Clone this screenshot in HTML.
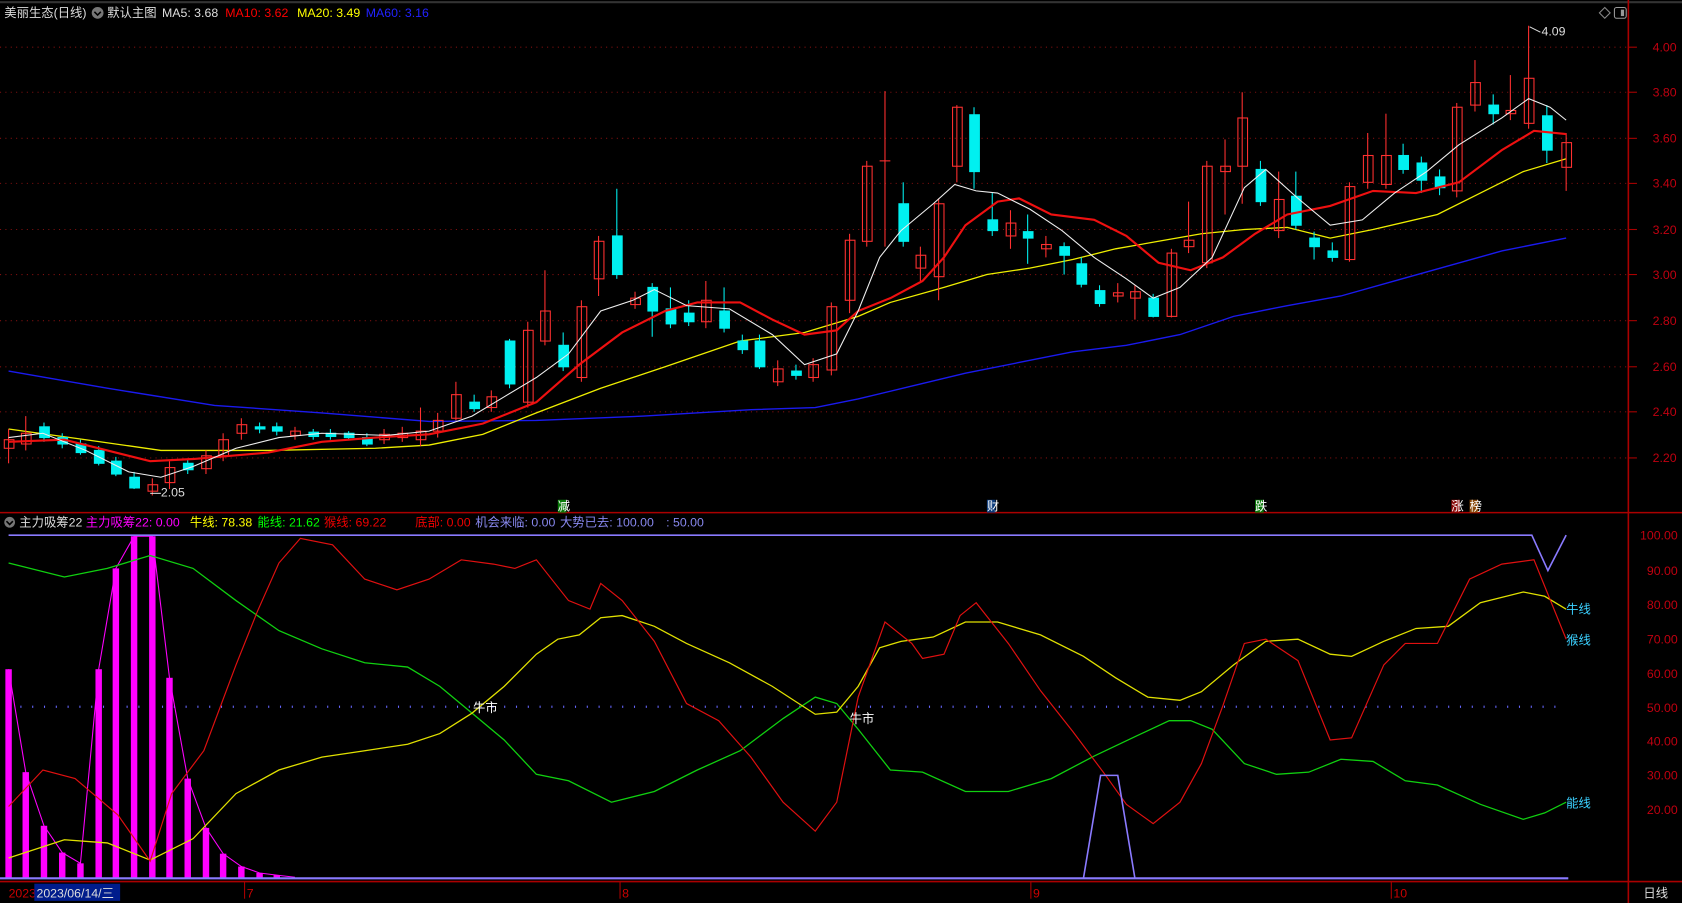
<!DOCTYPE html>
<html><head><meta charset="utf-8"><style>
html,body{margin:0;padding:0;background:#000;overflow:hidden}
svg{display:block}
text{font-family:"Liberation Sans","Noto Sans CJK SC",sans-serif;font-size:11.5px}
</style></head><body>
<svg width="1682" height="903" viewBox="0 0 1568 842" preserveAspectRatio="none" xmlns="http://www.w3.org/2000/svg">
<rect width="1568" height="842" fill="#000"/>
<line x1="0" y1="2" x2="1568" y2="2" stroke="#333" stroke-width="2"/>
<g stroke="#801010" stroke-dasharray="1,4" stroke-width="1">
<line x1="0" y1="44" x2="1518" y2="44"/><line x1="0" y1="86" x2="1518" y2="86"/><line x1="0" y1="129" x2="1518" y2="129"/><line x1="0" y1="171" x2="1518" y2="171"/><line x1="0" y1="214" x2="1518" y2="214"/><line x1="0" y1="256" x2="1518" y2="256"/><line x1="0" y1="299" x2="1518" y2="299"/><line x1="0" y1="342" x2="1518" y2="342"/><line x1="0" y1="384" x2="1518" y2="384"/><line x1="0" y1="427" x2="1518" y2="427"/>
</g>
<line x1="1518" y1="0" x2="1518" y2="842" stroke="#a00" stroke-width="1.5"/>
<line x1="0" y1="478" x2="1568" y2="478" stroke="#a00" stroke-width="1.5"/>
<line x1="0" y1="822" x2="1568" y2="822" stroke="#a00" stroke-width="1.5"/>
<g fill="#c00010" text-anchor="end">
<text x="1563" y="48">4.00</text><text x="1563" y="90">3.80</text><text x="1563" y="133">3.60</text><text x="1563" y="175">3.40</text><text x="1563" y="218">3.20</text><text x="1563" y="260">3.00</text><text x="1563" y="303">2.80</text><text x="1563" y="346">2.60</text><text x="1563" y="388">2.40</text><text x="1563" y="431">2.20</text>
<text x="1564" y="503">100.00</text><text x="1564" y="536">90.00</text><text x="1564" y="568">80.00</text><text x="1564" y="600">70.00</text><text x="1564" y="632">60.00</text><text x="1564" y="664">50.00</text><text x="1564" y="695">40.00</text><text x="1564" y="727">30.00</text><text x="1564" y="759">20.00</text>
</g>
<g stroke="#a00"><line x1="1518" y1="44" x2="1526" y2="44"/><line x1="1518" y1="86" x2="1526" y2="86"/><line x1="1518" y1="129" x2="1526" y2="129"/><line x1="1518" y1="171" x2="1526" y2="171"/><line x1="1518" y1="214" x2="1526" y2="214"/><line x1="1518" y1="256" x2="1526" y2="256"/><line x1="1518" y1="299" x2="1526" y2="299"/><line x1="1518" y1="342" x2="1526" y2="342"/><line x1="1518" y1="384" x2="1526" y2="384"/><line x1="1518" y1="427" x2="1526" y2="427"/></g>
<text x="4" y="16" fill="#ddd">美丽生态(日线)</text>
<circle cx="91" cy="12" r="5.5" fill="#777"/><path d="M88 11l3 3 3-3" stroke="#000" fill="none" stroke-width="1.5"/>
<text x="100" y="16" fill="#ddd">默认主图</text>
<text x="151" y="16" fill="#ddd">MA5: 3.68</text>
<text x="210" y="16" fill="#f00">MA10: 3.62</text>
<text x="277" y="16" fill="#ff0">MA20: 3.49</text>
<text x="341" y="16" fill="#22f">MA60: 3.16</text>
<path d="M1496 7l5 5-5 5-5-5z" fill="none" stroke="#888"/>
<rect x="1505" y="7" width="11" height="10" rx="2" fill="none" stroke="#999"/><rect x="1511" y="9" width="3" height="6" fill="#999"/>
<polyline fill="none" stroke="#1a1aee" stroke-width="1.3" points="8,346 100,362 200,378 300,385 400,393 500,392 600,388 700,382 760,380 800,372 850,360 900,348 950,338 1000,328 1050,322 1100,312 1150,295 1200,285 1250,276 1300,262 1350,248 1400,234 1460,222"/>
<polyline fill="none" stroke="#ee0" stroke-width="1.2" points="8,400 80,410 150,420 250,420 350,418 400,415 450,405 500,385 560,362 620,342 690,318 750,310 800,295 830,282 880,268 920,256 960,250 1000,242 1040,232 1080,225 1120,218 1160,214 1200,212 1240,222 1280,214 1340,200 1380,180 1420,160 1460,148"/>
<g stroke="#ff3030" fill="none" stroke-width="1">
<line x1="8" y1="400" x2="8" y2="432"/><rect x="4" y="410" width="9" height="8"/>
<line x1="24" y1="388" x2="24" y2="420"/><rect x="20" y="404" width="9" height="10"/>
<line x1="142" y1="446" x2="142" y2="462"/><rect x="138" y="452" width="9" height="6"/>
<line x1="158" y1="430" x2="158" y2="456"/><rect x="154" y="436" width="9" height="14"/>
<line x1="192" y1="420" x2="192" y2="442"/><rect x="188" y="425" width="9" height="12"/>
<line x1="208" y1="404" x2="208" y2="430"/><rect x="204" y="410" width="9" height="15"/>
<line x1="225" y1="390" x2="225" y2="410"/><rect x="221" y="396" width="9" height="8"/>
<line x1="275" y1="398" x2="275" y2="410"/><rect x="271" y="402" width="9" height="4"/>
<line x1="358" y1="400" x2="358" y2="414"/><rect x="354" y="405" width="9" height="5"/>
<line x1="375" y1="398" x2="375" y2="412"/><rect x="371" y="404" width="9" height="4"/>
<line x1="392" y1="380" x2="392" y2="416"/><rect x="388" y="402" width="9" height="8"/>
<line x1="408" y1="385" x2="408" y2="408"/><rect x="404" y="392" width="9" height="10"/>
<line x1="425" y1="356" x2="425" y2="392"/><rect x="421" y="368" width="9" height="22"/>
<line x1="458" y1="364" x2="458" y2="384"/><rect x="454" y="370" width="9" height="10"/>
<line x1="492" y1="300" x2="492" y2="380"/><rect x="488" y="308" width="9" height="67"/>
<line x1="508" y1="252" x2="508" y2="322"/><rect x="504" y="290" width="9" height="28"/>
<line x1="542" y1="280" x2="542" y2="356"/><rect x="538" y="286" width="9" height="66"/>
<line x1="558" y1="220" x2="558" y2="276"/><rect x="554" y="225" width="9" height="35"/>
<line x1="592" y1="272" x2="592" y2="288"/><rect x="588" y="278" width="9" height="6"/>
<line x1="658" y1="262" x2="658" y2="306"/><rect x="654" y="280" width="9" height="20"/>
<line x1="725" y1="336" x2="725" y2="360"/><rect x="721" y="344" width="9" height="12"/>
<line x1="758" y1="334" x2="758" y2="356"/><rect x="754" y="340" width="9" height="12"/>
<line x1="775" y1="282" x2="775" y2="350"/><rect x="771" y="286" width="9" height="59"/>
<line x1="792" y1="218" x2="792" y2="292"/><rect x="788" y="224" width="9" height="56"/>
<line x1="808" y1="150" x2="808" y2="230"/><rect x="804" y="155" width="9" height="70"/>
<line x1="825" y1="85" x2="825" y2="230"/><line x1="820" y1="150" x2="830" y2="150"/>
<line x1="858" y1="230" x2="858" y2="262"/><rect x="854" y="238" width="9" height="12"/>
<line x1="875" y1="185" x2="875" y2="280"/><rect x="871" y="190" width="9" height="68"/>
<line x1="892" y1="98" x2="892" y2="170"/><rect x="888" y="100" width="9" height="55"/>
<line x1="942" y1="196" x2="942" y2="232"/><rect x="938" y="208" width="9" height="12"/>
<line x1="975" y1="220" x2="975" y2="240"/><rect x="971" y="228" width="9" height="4"/>
<line x1="1042" y1="264" x2="1042" y2="282"/><rect x="1038" y="273" width="9" height="3"/>
<line x1="1058" y1="266" x2="1058" y2="298"/><rect x="1054" y="272" width="9" height="6"/>
<line x1="1092" y1="232" x2="1092" y2="296"/><rect x="1088" y="236" width="9" height="59"/>
<line x1="1108" y1="188" x2="1108" y2="236"/><rect x="1104" y="224" width="9" height="6"/>
<line x1="1125" y1="150" x2="1125" y2="250"/><rect x="1121" y="155" width="9" height="90"/>
<line x1="1142" y1="130" x2="1142" y2="200"/><rect x="1138" y="155" width="9" height="5"/>
<line x1="1158" y1="86" x2="1158" y2="190"/><rect x="1154" y="110" width="9" height="45"/>
<line x1="1192" y1="160" x2="1192" y2="222"/><rect x="1188" y="186" width="9" height="29"/>
<line x1="1258" y1="170" x2="1258" y2="244"/><rect x="1254" y="174" width="9" height="68"/>
<line x1="1275" y1="124" x2="1275" y2="176"/><rect x="1271" y="145" width="9" height="25"/>
<line x1="1292" y1="106" x2="1292" y2="176"/><rect x="1288" y="145" width="9" height="27"/>
<line x1="1358" y1="96" x2="1358" y2="184"/><rect x="1354" y="100" width="9" height="78"/>
<line x1="1375" y1="56" x2="1375" y2="104"/><rect x="1371" y="77" width="9" height="21"/>
<line x1="1408" y1="70" x2="1408" y2="112"/><rect x="1404" y="103" width="9" height="3"/>
<line x1="1425" y1="24" x2="1425" y2="120"/><rect x="1421" y="73" width="9" height="42"/>
<line x1="1460" y1="124" x2="1460" y2="178"/><rect x="1456" y="133" width="9" height="23"/>
</g>
<g fill="#00f0f0" stroke="#00f0f0" stroke-width="1">
<line x1="41" y1="394" x2="41" y2="412"/><rect x="37" y="398" width="9" height="10"/>
<line x1="58" y1="404" x2="58" y2="418"/><rect x="54" y="408" width="9" height="6"/>
<line x1="75" y1="410" x2="75" y2="424"/><rect x="71" y="414" width="9" height="8"/>
<line x1="92" y1="416" x2="92" y2="434"/><rect x="88" y="420" width="9" height="12"/>
<line x1="108" y1="426" x2="108" y2="444"/><rect x="104" y="430" width="9" height="12"/>
<line x1="125" y1="440" x2="125" y2="456"/><rect x="121" y="445" width="9" height="10"/>
<line x1="175" y1="428" x2="175" y2="442"/><rect x="171" y="432" width="9" height="6"/>
<line x1="242" y1="394" x2="242" y2="404"/><rect x="238" y="398" width="9" height="2"/>
<line x1="258" y1="394" x2="258" y2="406"/><rect x="254" y="398" width="9" height="4"/>
<line x1="292" y1="400" x2="292" y2="410"/><rect x="288" y="403" width="9" height="4"/>
<line x1="308" y1="400" x2="308" y2="410"/><rect x="304" y="404" width="9" height="3"/>
<line x1="325" y1="402" x2="325" y2="410"/><rect x="321" y="404" width="9" height="4"/>
<line x1="342" y1="404" x2="342" y2="416"/><rect x="338" y="408" width="9" height="6"/>
<line x1="442" y1="368" x2="442" y2="384"/><rect x="438" y="375" width="9" height="6"/>
<line x1="475" y1="316" x2="475" y2="362"/><rect x="471" y="318" width="9" height="40"/>
<line x1="525" y1="310" x2="525" y2="346"/><rect x="521" y="322" width="9" height="20"/>
<line x1="575" y1="176" x2="575" y2="260"/><rect x="571" y="220" width="9" height="36"/>
<line x1="608" y1="264" x2="608" y2="314"/><rect x="604" y="268" width="9" height="22"/>
<line x1="625" y1="268" x2="625" y2="306"/><rect x="621" y="288" width="9" height="14"/>
<line x1="642" y1="280" x2="642" y2="304"/><rect x="638" y="292" width="9" height="8"/>
<line x1="675" y1="268" x2="675" y2="310"/><rect x="671" y="290" width="9" height="16"/>
<line x1="692" y1="312" x2="692" y2="330"/><rect x="688" y="318" width="9" height="8"/>
<line x1="708" y1="312" x2="708" y2="344"/><rect x="704" y="318" width="9" height="24"/>
<line x1="742" y1="340" x2="742" y2="354"/><rect x="738" y="346" width="9" height="4"/>
<line x1="842" y1="170" x2="842" y2="230"/><rect x="838" y="190" width="9" height="35"/>
<line x1="908" y1="100" x2="908" y2="176"/><rect x="904" y="107" width="9" height="53"/>
<line x1="925" y1="180" x2="925" y2="220"/><rect x="921" y="205" width="9" height="10"/>
<line x1="958" y1="200" x2="958" y2="246"/><rect x="954" y="216" width="9" height="6"/>
<line x1="992" y1="226" x2="992" y2="256"/><rect x="988" y="230" width="9" height="8"/>
<line x1="1008" y1="240" x2="1008" y2="268"/><rect x="1004" y="246" width="9" height="19"/>
<line x1="1025" y1="266" x2="1025" y2="286"/><rect x="1021" y="271" width="9" height="12"/>
<line x1="1075" y1="274" x2="1075" y2="296"/><rect x="1071" y="278" width="9" height="17"/>
<line x1="1175" y1="150" x2="1175" y2="192"/><rect x="1171" y="158" width="9" height="30"/>
<line x1="1208" y1="160" x2="1208" y2="214"/><rect x="1204" y="183" width="9" height="27"/>
<line x1="1225" y1="216" x2="1225" y2="242"/><rect x="1221" y="222" width="9" height="8"/>
<line x1="1242" y1="226" x2="1242" y2="244"/><rect x="1238" y="234" width="9" height="6"/>
<line x1="1308" y1="134" x2="1308" y2="162"/><rect x="1304" y="145" width="9" height="13"/>
<line x1="1325" y1="146" x2="1325" y2="180"/><rect x="1321" y="152" width="9" height="16"/>
<line x1="1342" y1="158" x2="1342" y2="182"/><rect x="1338" y="165" width="9" height="10"/>
<line x1="1392" y1="88" x2="1392" y2="116"/><rect x="1388" y="98" width="9" height="8"/>
<line x1="1442" y1="98" x2="1442" y2="152"/><rect x="1438" y="108" width="9" height="32"/>
</g>
<polyline fill="none" stroke="#ee1010" stroke-width="2" points="8,412 60,410 100,420 140,430 180,428 250,422 300,412 350,408 400,405 450,395 500,375 540,340 580,310 620,290 650,282 690,282 720,298 750,312 780,308 800,290 830,278 860,262 880,240 900,210 930,188 950,185 980,200 1020,205 1050,220 1080,245 1110,252 1140,240 1170,218 1200,200 1240,192 1280,178 1320,180 1360,170 1400,140 1430,122 1460,125"/>
<polyline fill="none" stroke="#eee" stroke-width="1" points="8,408 40,404 80,420 120,440 150,445 180,435 220,418 260,408 300,404 360,406 400,402 440,388 470,370 500,352 530,330 560,290 590,280 610,270 640,285 680,288 720,312 750,340 780,330 800,290 820,240 840,215 870,190 890,172 910,178 930,180 960,195 990,215 1020,240 1050,260 1075,278 1100,268 1130,240 1160,175 1180,158 1210,185 1240,210 1270,205 1300,180 1330,160 1360,135 1400,110 1425,92 1445,100 1460,112"/>
<text x="1437" y="33" fill="#ddd">4.09</text><path d="M1426 25l10 5" stroke="#ddd"/>
<text x="150" y="463" fill="#ddd">2.05</text><path d="M140 460h10" stroke="#ddd"/>
<g font-size="10"><rect x="520" y="466" width="8" height="12" fill="#0a7a0a"/><text x="520" y="476" fill="#fff" font-size="10">减</text>
<rect x="920" y="466" width="8" height="12" fill="#0a3a7a"/><text x="920" y="476" fill="#fff" font-size="10">财</text>
<rect x="1170" y="466" width="8" height="12" fill="#0a7a0a"/><text x="1170" y="476" fill="#fff" font-size="10">跌</text>
<rect x="1353" y="466" width="8" height="12" fill="#8a0a0a"/><text x="1353" y="476" fill="#fff" font-size="10">涨</text>
<rect x="1370" y="466" width="8" height="12" fill="#8a4a0a"/><text x="1370" y="476" fill="#fff" font-size="10">榜</text></g>
<circle cx="9" cy="487" r="5" fill="#777"/><path d="M6 486l3 3 3-3" stroke="#000" fill="none" stroke-width="1.5"/>
<text x="18" y="491" fill="#ddd">主力吸筹22</text>
<text x="80" y="491" fill="#f0f">主力吸筹22: 0.00</text>
<text x="177" y="491" fill="#ff0">牛线: 78.38</text>
<text x="240" y="491" fill="#0f0">能线: 21.62</text>
<text x="302" y="491" fill="#e00">猴线: 69.22</text>
<text x="387" y="491" fill="#e00">底部: 0.00</text>
<text x="443" y="491" fill="#8888ee">机会来临: 0.00</text>
<text x="522" y="491" fill="#8888ee">大势已去: 100.00</text>
<text x="621" y="491" fill="#8888ee">: 50.00</text>
<line x1="8" y1="659" x2="1460" y2="659" stroke="#6666ff" stroke-dasharray="1,10" stroke-width="2"/>
<g fill="#f0f">
<rect x="5" y="624" width="6" height="195"/><rect x="21" y="720" width="6" height="99"/><rect x="38" y="770" width="6" height="49"/><rect x="55" y="795" width="6" height="24"/><rect x="72" y="805" width="6" height="14"/><rect x="89" y="624" width="6" height="195"/><rect x="105" y="530" width="6" height="289"/><rect x="122" y="500" width="6" height="319"/><rect x="139" y="500" width="6" height="319"/><rect x="155" y="632" width="6" height="187"/><rect x="172" y="726" width="6" height="93"/><rect x="189" y="772" width="6" height="47"/><rect x="205" y="796" width="6" height="23"/><rect x="222" y="808" width="6" height="11"/><rect x="239" y="814" width="6" height="5"/><rect x="255" y="816" width="6" height="3"/>
</g>
<polyline fill="none" stroke="#f0f" points="8,624 24,720 41,770 58,795 75,805 92,624 108,530 125,500 142,500 158,632 175,726 192,772 208,796 225,808 242,814 258,816 275,818"/>
<polyline fill="none" stroke="#10d010" stroke-width="1.2" points="8,525 60,538 100,530 140,518 180,530 220,560 260,588 300,605 340,618 380,622 410,640 440,665 470,690 500,722 530,728 570,748 610,738 650,718 690,700 730,670 760,650 780,656 800,680 830,718 860,720 900,738 940,738 980,726 1020,705 1060,686 1090,672 1110,672 1130,680 1160,712 1190,722 1220,720 1250,708 1280,710 1310,728 1340,732 1380,750 1420,764 1440,758 1460,748"/>
<polyline fill="none" stroke="#e0e000" stroke-width="1.2" points="8,800 60,783 100,786 140,802 180,782 220,740 260,718 300,706 340,700 380,694 410,684 440,665 470,640 500,610 520,596 540,592 560,576 580,574 610,584 640,600 680,618 720,640 760,666 780,664 800,640 820,604 840,598 870,594 900,580 930,580 970,592 1010,612 1040,632 1070,650 1100,653 1120,645 1150,620 1180,598 1210,596 1240,610 1260,612 1290,598 1320,586 1350,584 1380,562 1420,552 1440,556 1460,568"/>
<polyline fill="none" stroke="#e01010" stroke-width="1.1" points="8,752 40,718 70,726 110,760 140,803 160,740 190,700 220,620 240,570 260,525 280,502 310,508 340,540 370,550 400,540 430,522 460,526 480,530 500,522 530,560 550,568 560,544 580,560 610,598 640,656 670,672 700,706 730,748 760,775 780,748 800,650 825,580 850,600 860,614 880,610 895,574 910,562 940,600 970,644 1000,682 1030,722 1050,750 1075,768 1100,748 1120,712 1140,658 1160,600 1180,596 1210,616 1240,690 1260,688 1290,620 1310,600 1340,600 1370,540 1400,526 1430,522 1460,596"/>
<polyline fill="none" stroke="#8a7aff" stroke-width="1.5" points="8,499 1428,499 1443,532 1460,499"/>
<polyline fill="none" stroke="#8a7aff" stroke-width="1.5" points="1010,819 1026,723 1042,723 1058,819"/>
<line x1="0" y1="819" x2="1462" y2="819" stroke="#8a7aff" stroke-width="2"/>
<text x="441" y="664" fill="#fff" font-size="11">牛市</text>
<text x="792" y="674" fill="#fff" font-size="11">牛市</text>
<text x="1460" y="572" fill="#3bd0ff">牛线</text>
<text x="1460" y="601" fill="#3bd0ff">猴线</text>
<text x="1460" y="753" fill="#3bd0ff">能线</text>
<g stroke="#a00"><line x1="228" y1="822" x2="228" y2="838"/><line x1="578" y1="822" x2="578" y2="838"/><line x1="961" y1="822" x2="961" y2="838"/><line x1="1297" y1="822" x2="1297" y2="838"/></g>
<text x="8" y="837" fill="#c00">2023</text>
<rect x="32" y="824" width="80" height="16" fill="#001c8c"/>
<text x="34" y="837" fill="#ddd">2023/06/14/三</text>
<text x="230" y="837" fill="#c00">7</text><text x="580" y="837" fill="#c00">8</text><text x="963" y="837" fill="#c00">9</text><text x="1299" y="837" fill="#c00">10</text>
<text x="1532" y="837" fill="#ddd">日线</text>
</svg>
</body></html>
